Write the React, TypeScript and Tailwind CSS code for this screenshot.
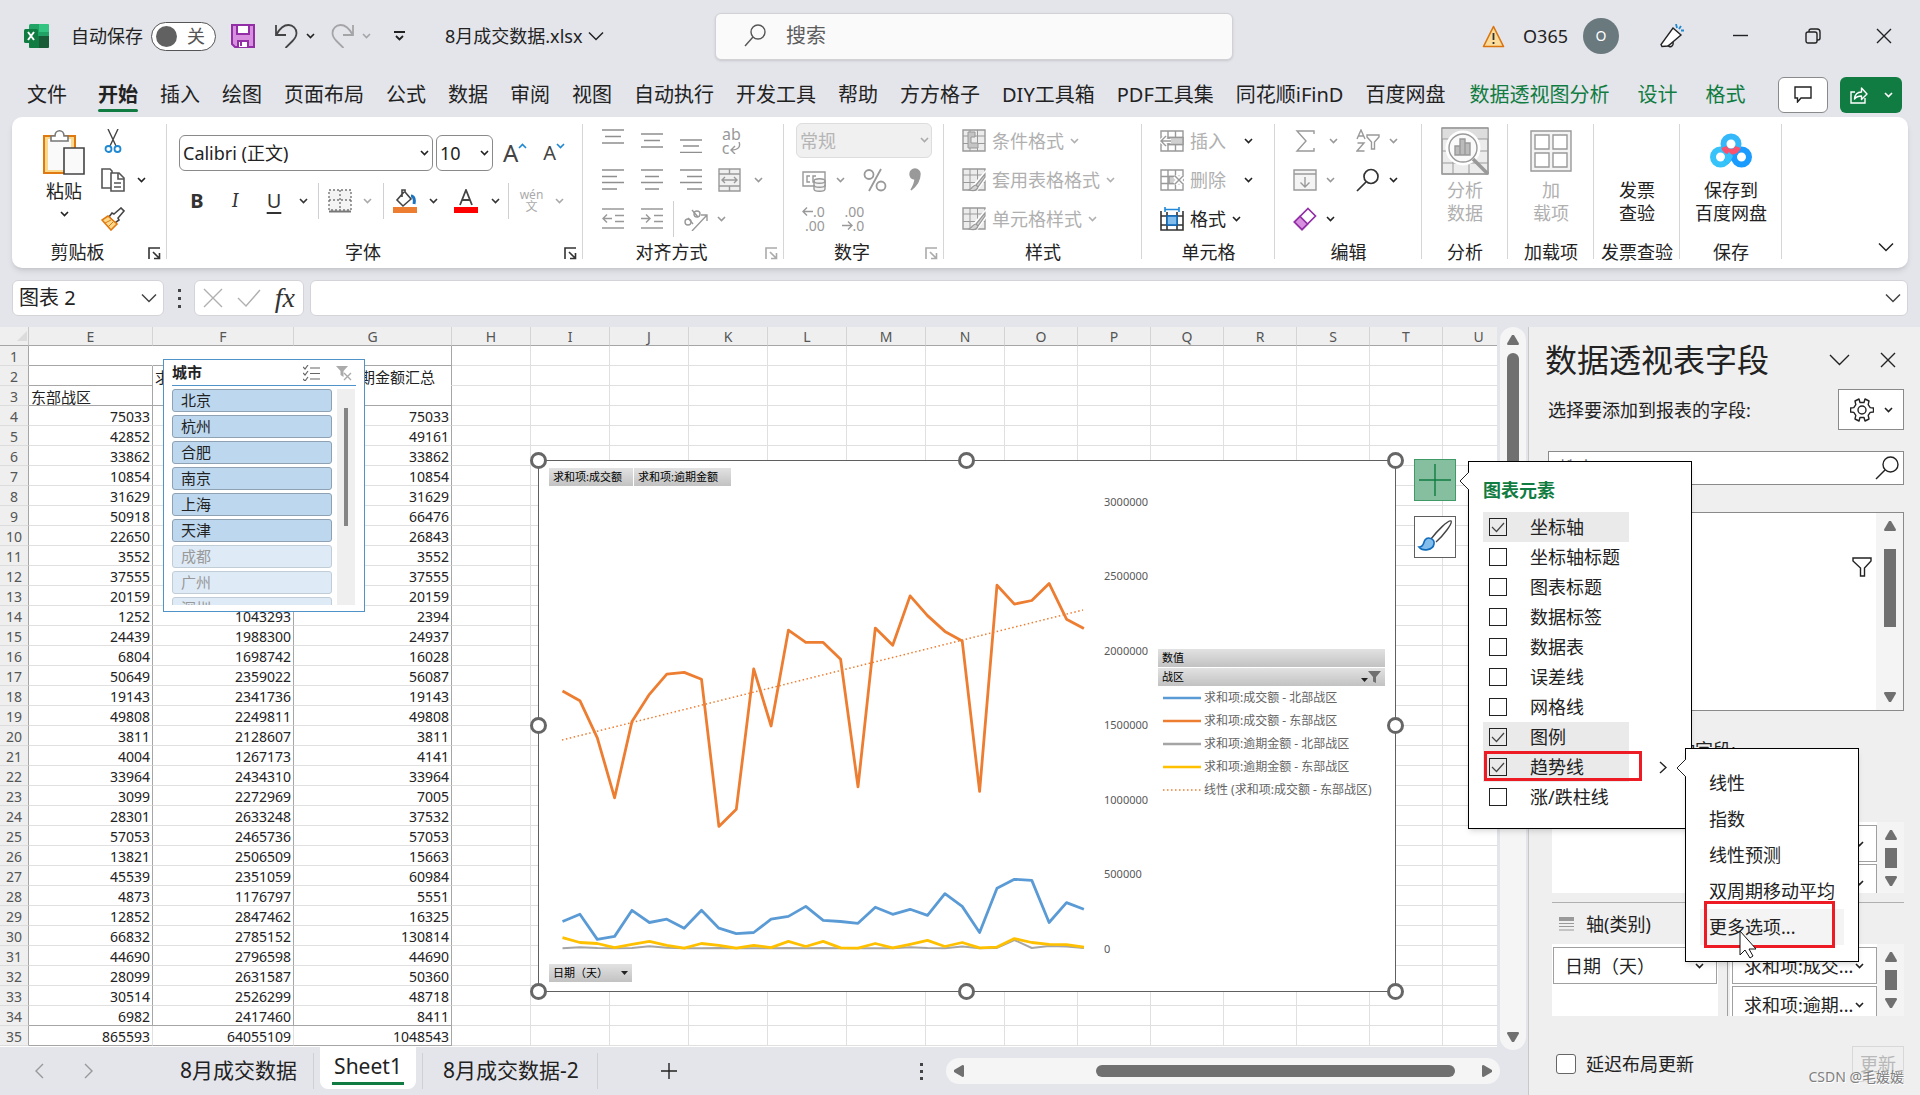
import { useState } from "react";
import type { ReactNode } from "react";
import clsx from "clsx";

const FONT = "font-['Noto_Sans','Noto_Sans_CJK_SC',sans-serif]";

const TABS = [
  "插入",
  "绘图",
  "页面布局",
  "公式",
  "数据",
  "审阅",
  "视图",
  "自动执行",
  "开发工具",
  "帮助",
  "方方格子",
  "DIY工具箱",
  "PDF工具集",
  "同花顺iFinD",
  "百度网盘",
];
const CONTEXT_TABS = ["数据透视图分析", "设计", "格式"];

const COLUMNS = [
  { name: "E", width: "w-[124px]" },
  { name: "F", width: "w-[141px]" },
  { name: "G", width: "w-[158px]" },
  { name: "H", width: "w-[79px]" },
  { name: "I", width: "w-[79px]" },
  { name: "J", width: "w-[79px]" },
  { name: "K", width: "w-[79px]" },
  { name: "L", width: "w-[79px]" },
  { name: "M", width: "w-[79px]" },
  { name: "N", width: "w-[79px]" },
  { name: "O", width: "w-[73px]" },
  { name: "P", width: "w-[73px]" },
  { name: "Q", width: "w-[73px]" },
  { name: "R", width: "w-[73px]" },
  { name: "S", width: "w-[73px]" },
  { name: "T", width: "w-[73px]" },
  { name: "U", width: "" },
];

// columns E, F and G of the pivot table, one entry per sheet row
const ROWS: string[][] = [
  ["", "", ""],
  ["", "求和项:成交额汇总", "求和项:逾期金额汇总"],
  ["东部战区", "", ""],
  ["75033", "", "75033"],
  ["42852", "", "49161"],
  ["33862", "", "33862"],
  ["10854", "", "10854"],
  ["31629", "", "31629"],
  ["50918", "", "66476"],
  ["22650", "", "26843"],
  ["3552", "", "3552"],
  ["37555", "", "37555"],
  ["20159", "", "20159"],
  ["1252", "1043293", "2394"],
  ["24439", "1988300", "24937"],
  ["6804", "1698742", "16028"],
  ["50649", "2359022", "56087"],
  ["19143", "2341736", "19143"],
  ["49808", "2249811", "49808"],
  ["3811", "2128607", "3811"],
  ["4004", "1267173", "4141"],
  ["33964", "2434310", "33964"],
  ["3099", "2272969", "7005"],
  ["28301", "2633248", "37532"],
  ["57053", "2465736", "57053"],
  ["13821", "2506509", "15663"],
  ["45539", "2351059", "60984"],
  ["4873", "1176797", "5551"],
  ["12852", "2847462", "16325"],
  ["66832", "2785152", "130814"],
  ["44690", "2796598", "44690"],
  ["28099", "2631587", "50360"],
  ["30514", "2526299", "48718"],
  ["6982", "2417460", "8411"],
  ["865593", "64055109", "1048543"],
];

const SLICER = [
  { name: "北京", on: true },
  { name: "杭州", on: true },
  { name: "合肥", on: true },
  { name: "南京", on: true },
  { name: "上海", on: true },
  { name: "天津", on: true },
  { name: "成都", on: false },
  { name: "广州", on: false },
  { name: "深圳", on: false },
];

// chart series, in thousands
const EAST = [1729, 1664, 1415, 1012, 1525, 1707, 1842, 1854, 1808, 820, 935, 1878, 1494, 2137, 2055, 2055, 1942, 1086, 2151, 2036, 2367, 2235, 2129, 2065, 1055, 2439, 2312, 2336, 2451, 2211, 2149];
const NORTH = [182, 230, 62, 82, 257, 175, 197, 137, 257, 137, 101, 108, 197, 216, 283, 189, 182, 170, 278, 230, 264, 223, 369, 283, 108, 405, 465, 458, 175, 309, 264];
const EAST_DUE = [74, 41, 34, 7, 29, 48, 22, 3, 34, 22, 3, 22, 7, 48, 14, 48, 5, 3, 34, 5, 29, 55, 14, 41, 5, 10, 67, 41, 29, 26, 10];
const NORTH_DUE = [3, 9, 4, 3, 4, 16, 6, 2, 3, 4, 3, 3, 3, 4, 3, 4, 3, 2, 3, 3, 9, 4, 3, 14, 3, 5, 58, 4, 18, 14, 5];

const LEGEND = [
  { label: "求和项:成交额 - 北部战区", color: "#5b9bd5", dotted: false },
  { label: "求和项:成交额 - 东部战区", color: "#ed7d31", dotted: false },
  { label: "求和项:逾期金额 - 北部战区", color: "#a5a5a5", dotted: false },
  { label: "求和项:逾期金额 - 东部战区", color: "#ffc000", dotted: false },
  { label: "线性 (求和项:成交额 - 东部战区)", color: "#ed7d31", dotted: true },
];

const ELEMENTS = ["坐标轴", "坐标轴标题", "图表标题", "数据标签", "数据表", "误差线", "网格线", "图例", "趋势线", "涨/跌柱线"];
const TREND_ITEMS = ["线性", "指数", "线性预测", "双周期移动平均", "更多选项..."];

type IconProps = { children: ReactNode; size?: number; w?: number; className?: string; stroke?: number };

function Icon({ children, size = 24, w, className, stroke = 1.4 }: IconProps) {
  return (
    <svg
      width={w ?? size}
      height={size}
      viewBox={`0 0 ${w ?? size} ${size}`}
      fill="none"
      stroke="currentColor"
      strokeWidth={stroke}
      className={clsx("shrink-0", className)}
      aria-hidden="true"
    >
      {children}
    </svg>
  );
}

function Chevron({ className, big }: { className?: string; big?: boolean }) {
  return big ? (
    <svg width="16" height="10" viewBox="0 0 16 10" fill="none" stroke="currentColor" strokeWidth="1.5" className={clsx("shrink-0", className)}>
      <path d="M1 1.5l7 7 7-7" />
    </svg>
  ) : (
    <svg width="9" height="6" viewBox="0 0 9 6" fill="none" stroke="currentColor" strokeWidth="1.6" className={clsx("shrink-0", className)}>
      <path d="M1 1l3.5 3.5L8 1" />
    </svg>
  );
}

function Tool({ label, className, children }: { label: string; className?: string; children: ReactNode }) {
  return (
    <button type="button" aria-label={label} className={clsx("flex h-[39px] shrink-0 items-center justify-center", className)}>
      {children}
    </button>
  );
}

function Group({ label, className, launcher, children }: { label: string; className: string; launcher?: string; children: ReactNode }) {
  return (
    <section className={clsx("relative flex shrink-0 flex-col pt-1", className)}>
      <div className="h-[117px]">{children}</div>
      <div className={clsx("flex h-7 items-center justify-center text-lg", launcher && "pr-6")}>{label}</div>
      {launcher && (
        <button type="button" aria-label={`${label}设置`} className={clsx("absolute right-1.5 bottom-2", launcher)}>
          <Icon size={13} stroke={1.6}>
            <path d="M1 12V1h11M5 5l6 6M11.5 6v5.5H6" />
          </Icon>
        </button>
      )}
      <div className="absolute top-[7px] right-0 h-[135px] w-px bg-[#d6d6d6]" />
    </section>
  );
}

function TitleBar() {
  return (
    <header className="flex h-[72px] shrink-0 items-center pl-6">
      <svg width="25" height="24" viewBox="0 0 25 24" className="shrink-0">
        <rect x="5" width="20" height="24" rx="1.5" fill="#21a366" />
        <path d="M15 0h8.500a1.500 1.500 0 0 1 1.500 1.500V8H15z" fill="#33c481" />
        <path d="M5 12h10v12H6.500A1.500 1.500 0 0 1 5 22.500z" fill="#107c41" />
        <path d="M15 12h10v10.500a1.500 1.500 0 0 1-1.500 1.500H15z" fill="#185c37" />
        <rect y="5" width="14" height="14" rx="1.500" fill="#107c41" />
        <path d="M4 8l6 8M10 8l-6 8" stroke="#fff" strokeWidth="2" />
      </svg>
      <span className="ml-[22px] text-lg">自动保存</span>
      <button type="button" role="switch" aria-checked="false" aria-label="自动保存" className="ml-2 flex h-[29px] w-[65px] shrink-0 items-center gap-2.5 rounded-full border border-[#555] bg-white pl-1 text-lg text-[#555]">
        <span className="size-[21px] rounded-full bg-[#616161]" />关
      </button>
      <button type="button" aria-label="保存" className="ml-[15px]">
        <Icon className="text-[#922fa6]" stroke={2}>
          <path d="M1 1h22v22H4l-3-3z" fill="#d98fe0" />
          <path d="M6 1h12v9H6zM7 23v-6h10v6" fill="#fff" />
          <path d="M10 18v4" />
        </Icon>
      </button>
      <button type="button" aria-label="撤消" className="ml-5 flex items-center gap-2 text-[#444]">
        <Icon size={24} w={23} stroke={1.8}>
          <path d="M1 1v10h10M1.500 10.500C5 4 9 1 13.500 1c4.500 0 8 3.500 8 8 0 3-1 5-4 8l-7 7" />
        </Icon>
        <Chevron className="text-[#222]" />
      </button>
      <button type="button" aria-label="恢复" className="ml-4 flex items-center gap-2 text-[#a5a5a8]">
        <Icon size={24} w={23} stroke={1.8}>
          <path d="M22 1v10H12M21.500 10.500C18 4 14 1 9.500 1c-4.500 0-8 3.500-8 8 0 3 1 5 4 8l7 7" />
        </Icon>
        <Chevron />
      </button>
      <button type="button" aria-label="自定义快速访问工具栏" className="ml-[23px]">
        <Icon size={10} w={11} stroke={1.800}>
          <path d="M0 1h11M2 5l3.500 3.500L9 5" />
        </Icon>
      </button>
      <button type="button" className="ml-10 flex w-40 shrink-0 items-center gap-1.5 text-lg whitespace-nowrap">
        8月成交数据.xlsx
        <Chevron big />
      </button>
      <label className="ml-[110px] flex h-[47px] w-[518px] items-center gap-5 rounded-md border border-[#d2d2d6] bg-[#fafafa] pl-7 shadow-sm">
        <Icon size={24} w={22} className="text-[#555]">
          <circle cx="14" cy="8" r="7" />
          <path d="M9 13L1 22" />
        </Icon>
        <input aria-label="搜索" placeholder="搜索" className="min-w-0 flex-1 bg-transparent text-xl outline-none placeholder:text-[#5c5c5c]" />
      </label>
      <div className="ml-auto flex items-center">
        <Icon size={23} w={23} className="text-[#d9730d]" stroke={1.600}>
          <path d="M11.500 1.500l10 20H1.500z" fill="#fbdc9a" strokeLinejoin="round" />
          <path d="M11.500 8v7M11.500 17v2" stroke="#333" strokeWidth="1.800" />
        </Icon>
        <span className="ml-[18px] text-lg">O365</span>
        <span className="ml-[15px] grid size-9 place-items-center rounded-full bg-[#69797e] text-sm text-white">O</span>
        <button type="button" aria-label="新增功能" className="ml-10">
          <Icon size={24} w={25}>
            <path d="M14 4l8 7-13 11-6 .500-1-2z" fill="#fff" />
            <path d="M9 21c1 3 6 2 5-3" />
            <path d="M17 0l1 4M22 2l-2 3M25 6.500h-3" stroke="#1e88d2" strokeWidth="1.800" />
          </Icon>
        </button>
        <button type="button" aria-label="最小化" className="ml-[49px]">
          <Icon size={16}><path d="M0 7.500h15" stroke="#222" /></Icon>
        </button>
        <button type="button" aria-label="向下还原" className="ml-[56px]">
          <Icon size={16} className="text-[#222]">
            <rect x="1" y="4" width="11" height="11" rx="2" />
            <path d="M4 4V3a2 2 0 0 1 2-2h6a3 3 0 0 1 3 3v6a2 2 0 0 1-2 2h-1" />
          </Icon>
        </button>
        <button type="button" aria-label="关闭" className="mr-7 ml-[55px]">
          <Icon size={16} className="text-[#222]"><path d="M1 1l14 14M15 1L1 15" /></Icon>
        </button>
      </div>
    </header>
  );
}

function TabBar() {
  return (
    <nav className="flex h-[45px] shrink-0 items-center pr-[18px] pl-[27px] text-xl whitespace-nowrap">
      <button type="button">文件</button>
      <button type="button" className="relative ml-[31px] font-bold">
        开始
        <span className="absolute -bottom-[3px] left-0 h-[3px] w-full rounded-full bg-[#107c41]" />
      </button>
      <div className="ml-[22px] flex gap-[22px]">
        {TABS.map((tab) => (
          <button key={tab} type="button">{tab}</button>
        ))}
      </div>
      <div className="ml-6 flex gap-7 text-[#107c41]">
        {CONTEXT_TABS.map((tab) => (
          <button key={tab} type="button">{tab}</button>
        ))}
      </div>
      <button type="button" aria-label="批注" className="ml-auto grid h-9 w-[50px] place-items-center rounded-md border border-[#8a8a8a] bg-white">
        <Icon size={17} w={18}><path d="M1 1h16v11H7l-3.500 4v-4H1z" /></Icon>
      </button>
      <button type="button" aria-label="共享" className="ml-3 flex h-9 w-[62px] items-center justify-center gap-4 rounded-md bg-[#107c41] text-white">
        <Icon size={18} w={18}>
          <path d="M5 6H1v11h14v-5" />
          <path d="M4.500 13c.500-5 3-7 7-7V2l5.500 6-5.500 5.500V10c-3 0-5 .500-7 3z" strokeLinejoin="round" />
        </Icon>
        <Chevron />
      </button>
    </nav>
  );
}

function AlignIcon({ kind }: { kind: "left" | "center" | "right" | "top" | "middle" | "bottom" }) {
  const lines = {
    left: "M0 2h22M0 8.500h15M0 14.500h22M0 21h15",
    center: "M0 2h22M4 8.500h14M0 14.500h22M4 21h14",
    right: "M0 2h22M7 8.500h15M0 14.500h22M7 21h15",
    top: "M0 1h22M3 7.500h16M0 14h22",
    middle: "M0 5h22M3 11.500h16M0 18h22",
    bottom: "M0 11h22M3 17h16M0 23.500h22",
  };
  return <Icon w={22} className="text-[#8f8f8f]"><path d={lines[kind]} /></Icon>;
}

function StyleIcon({ brush }: { brush?: boolean }) {
  return (
    <Icon className="text-[#999]">
      <path d="M1 1h22v21H1z" fill="#ececec" />
      <path d="M8 1v21M15.500 1v21M1 7h22M1 14.500h22" strokeWidth="1" />
      {brush ? (
        <>
          <path d="M24 4L12 18l3 3 9-12z" fill="#fff" stroke="#fff" strokeWidth="3" />
          <path d="M23 6l-9 11 2 2 7-10zM14 17c-3 0-3 3-7 5 4 1 8 1 9-3z" fill="#d4d4d4" strokeWidth="1.200" />
        </>
      ) : (
        <path d="M6 3h7v5H9v6h7v5H6z" fill="#c4c4c4" strokeWidth="1" />
      )}
    </Icon>
  );
}

function CellIcon({ kind }: { kind: "insert" | "delete" | "format" }) {
  if (kind === "format") {
    return (
      <Icon className="text-[#333]" stroke={1.600}>
        <path d="M1 4v19h22V4M1 9h22M1 18h22M7 5v18M17 5v18" />
        <rect x="7" y="9" width="10" height="9" fill="#83bdec" stroke="#0f6cbd" />
        <path d="M5 2.500h14M5 0v5M19 0v5" stroke="#2088d8" />
      </Icon>
    );
  }
  return (
    <Icon className="text-[#999]">
      <path d="M1 2h22v20H1zM1 8.500h22M1 15.500h22M8 2v20M15.500 2v20" />
      <rect x="9" y="8.500" width="14" height="7" fill="#d0d0d0" />
      {kind === "insert" ? (
        <>
          <path d="M11 12H1M6 7l-5 5 5 5" stroke="#fff" strokeWidth="4" />
          <path d="M11 12H1M6 7l-5 5 5 5" />
        </>
      ) : (
        <>
          <path d="M15 8l8 8M23 8l-8 8" stroke="#fff" strokeWidth="5" />
          <path d="M15 8l8 8M23 8l-8 8" />
        </>
      )}
    </Icon>
  );
}

function Divider({ className }: { className?: string }) {
  return <div className={clsx("h-9 w-px shrink-0 bg-[#d0d0d2]", className)} />;
}

function Ribbon() {
  return (
    <div className="mx-3 flex h-[151px] shrink-0 rounded-[10px] bg-white shadow-md">
      <Group label="剪贴板" className="w-[155px]" launcher="text-[#333]">
        <div className="flex pl-[31px]">
          <button type="button" className="flex w-[42px] shrink-0 flex-col items-center pt-2 text-lg">
            <Icon size={46} w={42} className="shrink-0 text-[#e07a10]" stroke={2}>
              <path d="M1 7h31v37H1z" fill="#fbd98c" />
              <path d="M5 10h23v31H5z" fill="#fafafa" stroke="none" />
              <path d="M8 12V7h4c0-7 9-7 9 0h4v5z" fill="#fff" stroke="#777" strokeWidth="1.600" />
              <path d="M21 19h20v26H21z" fill="#fafafa" stroke="#444" strokeWidth="1.600" />
            </Icon>
            <span className="mt-0.5 leading-7 whitespace-nowrap">粘贴</span>
            <Chevron className="mt-1.5" />
          </button>
          <div className="ml-4 flex flex-col items-start">
            <Tool label="剪切">
              <Icon size={24} className="text-[#444]">
                <path d="M7 0l8 17M17 0L9 17" />
                <circle cx="7.500" cy="20" r="3" stroke="#1e88d2" strokeWidth="1.800" />
                <circle cx="16.500" cy="20" r="3" stroke="#1e88d2" strokeWidth="1.800" />
              </Icon>
            </Tool>
            <Tool label="复制" className="gap-3">
              <Icon size={24} className="text-[#555]" stroke={1.600}>
                <path d="M1 1h8l2 2v17H1z" fill="#fff" />
                <path d="M10 5h8l5 5v13H10z" fill="#fff" />
                <path d="M17 5v6h6M13 15h7M13 19h7" />
              </Icon>
              <Chevron />
            </Tool>
            <Tool label="格式刷">
              <Icon size={24} stroke={1.600}>
                <path d="M13 7l7-6 3 3-6 7 1 2-4 3-6-6 3-4z" fill="#fff" stroke="#444" />
                <path d="M7 9L1 13l9 10 6-6z" fill="#fbd98c" stroke="#e07a10" />
                <path d="M4 16l6-3M7 20l5-5" stroke="#e07a10" strokeWidth="1" />
              </Icon>
            </Tool>
          </div>
        </div>
      </Group>

      <Group label="字体" className="w-[416px]" launcher="text-[#333]">
        <div className="flex h-[60px] items-center pt-1 pl-3">
          <div className="relative">
            <select aria-label="字体" className="h-9 w-[254px] appearance-none rounded-md border border-[#8a8a8a] pl-[3px] text-lg">
              <option>Calibri (正文)</option>
            </select>
            <Chevron className="pointer-events-none absolute top-[15px] right-1" />
          </div>
          <div className="relative ml-[3px]">
            <select aria-label="字号" className="h-9 w-[57px] appearance-none rounded-md border border-[#8a8a8a] pl-[3px] text-lg">
              <option>10</option>
            </select>
            <Chevron className="pointer-events-none absolute top-[15px] right-1" />
          </div>
          <button type="button" aria-label="增大字号" className="ml-2.5 flex items-start text-2xl leading-7 text-[#444]">
            A<Chevron className="mt-1 rotate-180 text-[#1e88d2]" />
          </button>
          <button type="button" aria-label="减小字号" className="ml-4 flex items-start text-xl leading-7 text-[#444]">
            A<Chevron className="mt-1 text-[#1e88d2]" />
          </button>
        </div>
        <div className="flex items-center pl-[11px] text-xl text-[#333]">
          <Tool label="加粗" className="w-[38px] font-bold">B</Tool>
          <Tool label="倾斜" className="w-[38px] font-serif italic">I</Tool>
          <Tool label="下划线" className="w-10 underline underline-offset-4">U</Tool>
          <Tool label="下划线样式" className="w-[19px]"><Chevron /></Tool>
          <Divider className="mx-[5px]" />
          <Tool label="边框" className="w-8">
            <Icon className="text-[#777]">
              <path d="M1 1h22v20H1zM12 1v20M1 11h22" strokeDasharray="2 2" fill="#f4f4f4" />
              <path d="M1 22.500h22" strokeWidth="2" />
            </Icon>
          </Tool>
          <Tool label="边框样式" className="w-[23px] text-[#aaa]"><Chevron /></Tool>
          <Divider className="mx-1" />
          <Tool label="填充颜色" className="w-[34px]">
            <Icon className="text-[#444]" stroke={1.600}>
              <path d="M11 3L4 11l6 6 8-7-6-7V1H9v7" />
              <path d="M18 7c3 0 4 4 3 8" stroke="#1a72c0" strokeWidth="3" />
              <path d="M0 18h24v6H0z" fill="#ed7d31" stroke="none" />
            </Icon>
          </Tool>
          <Tool label="更多填充颜色" className="w-[22px]"><Chevron /></Tool>
          <Tool label="字体颜色" className="w-11">
            <Icon className="text-[#444]" stroke={1.800}>
              <path d="M6 16l6-15 6 15M8 11h8" />
              <path d="M0 18h24v6H0z" fill="#f00" stroke="none" />
            </Icon>
          </Tool>
          <Tool label="更多字体颜色" className="w-3.5"><Chevron /></Tool>
          <Divider className="mx-1.5" />
          <Tool label="拼音指南" className="w-[33px] flex-col text-xs leading-3 text-[#aaa]">
            <span>wén</span>
            <span>文</span>
          </Tool>
          <Tool label="拼音设置" className="w-[22px] text-[#aaa]"><Chevron /></Tool>
        </div>
      </Group>

      <Group label="对齐方式" className="w-[201px]" launcher="text-[#aaa]">
        <div className="flex pl-2.5">
          <Tool label="顶端对齐" className="w-[39px]"><AlignIcon kind="top" /></Tool>
          <Tool label="垂直居中" className="w-[39px]"><AlignIcon kind="middle" /></Tool>
          <Tool label="底端对齐" className="w-[39px]"><AlignIcon kind="bottom" /></Tool>
          <Tool label="自动换行" className="w-[43px] text-[#999]">
            <span className="flex flex-col text-base leading-[14px]">
              <span>ab</span>
              <span className="flex items-center">
                c
                <Icon size={12}><path d="M10 0c2 5-1 8-8 8M6 4L2 8l4 4" /></Icon>
              </span>
            </span>
          </Tool>
        </div>
        <div className="flex pl-2.5 text-[#999]">
          <Tool label="左对齐" className="w-[39px]"><AlignIcon kind="left" /></Tool>
          <Tool label="居中" className="w-[39px]"><AlignIcon kind="center" /></Tool>
          <Tool label="右对齐" className="w-[39px]"><AlignIcon kind="right" /></Tool>
          <Tool label="合并后居中" className="w-[39px]">
            <Icon w={23}>
              <path d="M1 1h21v22H1zM1 6h21M1 18h21M11.500 1v5M11.500 18v5" fill="#f0f0f0" />
              <path d="M4 12h15M7 9l-3 3 3 3M16 9l3 3-3 3" />
            </Icon>
          </Tool>
          <Tool label="合并选项" className="w-[18px]"><Chevron /></Tool>
        </div>
        <div className="flex items-center pl-2.5 text-[#999]">
          <Tool label="减少缩进量" className="w-[39px]">
            <Icon w={22}><path d="M0 2h22M13 8.500h9M13 14.500h9M0 21h22M10 11.500H1M5 7.500l-4 4 4 4" /></Icon>
          </Tool>
          <Tool label="增加缩进量" className="w-[39px]">
            <Icon w={22}><path d="M0 2h22M13 8.500h9M13 14.500h9M0 21h22M0 11.500h9M5 7.500l4 4-4 4" /></Icon>
          </Tool>
          <Divider className="ml-0.5" />
          <Tool label="方向" className="w-11">
            <Icon>
              <path d="M8 24L23 8M17 8h6v6" />
              <circle cx="4" cy="15" r="3" />
              <path d="M4 11l5 6M8 3l6 7" />
              <circle cx="13" cy="7" r="3" />
            </Icon>
          </Tool>
          <Tool label="方向选项" className="w-1.5"><Chevron /></Tool>
        </div>
      </Group>

      <Group label="数字" className="w-[160px]" launcher="text-[#aaa]">
        <div className="relative h-[39px] pt-0.5 pl-3">
          <select aria-label="数字格式" disabled className="h-[35px] w-[136px] appearance-none rounded-md border border-[#ddd] bg-[#f0f0f0] pl-[3px] text-lg text-[#b5b5b5] opacity-100">
            <option>常规</option>
          </select>
          <Chevron className="pointer-events-none absolute top-4 right-[15px] text-[#aaa]" />
        </div>
        <div className="flex pl-3.5 text-[#999]">
          <Tool label="会计数字格式" className="w-8">
            <Icon>
              <path d="M1 4h22v14H1z" />
              <path d="M8 8H5v6h3M14 8h-3v6h3" />
              <path d="M12 13c0-3 11-3 11 0v8c0 3-11 3-11 0z" fill="#f4f4f4" />
              <path d="M12 13c0 3 11 3 11 0M12 17c0 3 11 3 11 0" />
            </Icon>
          </Tool>
          <Tool label="会计格式选项" className="w-5"><Chevron /></Tool>
          <Tool label="百分比样式" className="w-[50px]">
            <Icon stroke={1.800}>
              <circle cx="6" cy="6.500" r="4.500" />
              <circle cx="18" cy="18" r="4.500" />
              <path d="M18 1L6 23" />
            </Icon>
          </Tool>
          <Tool label="千位分隔样式" className="w-[30px]">
            <Icon w={14}><path d="M2 6a5 5 0 0 1 10 0c0 7-4 12-9 16 3-5 4-8 4-11-3 0-5-2-5-5z" fill="currentColor" /></Icon>
          </Tool>
        </div>
        <div className="flex pl-2.5 text-sm leading-[14px] text-[#999]">
          <Tool label="增加小数位数" className="w-[39px]">
            <span className="flex flex-col items-end">
              <span className="flex items-center"><Icon size={9} w={11}><path d="M11 4.500H1M5 .500l-4 4 4 4" /></Icon>.0</span>
              <span>.00</span>
            </span>
          </Tool>
          <Tool label="减少小数位数" className="w-10">
            <span className="flex flex-col items-end">
              <span>.00</span>
              <span className="flex items-center"><Icon size={9} w={11}><path d="M0 4.500h10M6 .500l4 4-4 4" /></Icon>.0</span>
            </span>
          </Tool>
        </div>
      </Group>

      <Group label="样式" className="w-[198px]">
        <div className="flex flex-col items-start pl-[18px] text-lg text-[#b0b0b0]">
          <Tool label="条件格式" className="gap-1.5"><StyleIcon />条件格式<Chevron /></Tool>
          <Tool label="套用表格格式" className="gap-1.5"><StyleIcon brush />套用表格格式<Chevron /></Tool>
          <Tool label="单元格样式" className="gap-1.5"><StyleIcon brush />单元格样式<Chevron /></Tool>
        </div>
      </Group>

      <Group label="单元格" className="w-[133px]">
        <div className="flex flex-col items-start pl-[18px] text-lg text-[#b0b0b0]">
          <Tool label="插入" className="gap-1.5"><CellIcon kind="insert" />插入<Chevron className="ml-3 text-[#222]" /></Tool>
          <Tool label="删除" className="gap-1.5"><CellIcon kind="delete" />删除<Chevron className="ml-3 text-[#222]" /></Tool>
          <Tool label="格式" className="gap-1.5 text-[#222]"><CellIcon kind="format" />格式<Chevron /></Tool>
        </div>
      </Group>

      <Group label="编辑" className="w-[147px]">
        <div className="grid grid-cols-[24px_33px_36px_14px] pl-[18px] text-[#999]">
          <Tool label="自动求和"><Icon w={20}><path d="M19 5V2H2l9 10-9 10h17v-3" /></Icon></Tool>
          <Tool label="求和选项"><Chevron /></Tool>
          <Tool label="排序和筛选">
            <Icon>
              <path d="M1 10l4-9 4 9M2.500 7h5M1.500 14H8l-7 8h7.500" />
              <path d="M11 6h12v2l-4.500 5v7h-3v-7L11 8z" />
            </Icon>
          </Tool>
          <Tool label="排序选项"><Chevron /></Tool>
          <Tool label="填充">
            <Icon>
              <path d="M1 2h22v20H1z" fill="#f4f4f4" />
              <path d="M1 6h22M12 9v10M7.500 14.500L12 19l4.500-4.500" />
            </Icon>
          </Tool>
          <Tool label="填充选项" className="pr-1.5"><Chevron /></Tool>
          <Tool label="查找和选择">
            <Icon className="text-[#333]" stroke={1.700}>
              <circle cx="15" cy="8.500" r="7" />
              <path d="M10 14l-9 9" />
            </Icon>
          </Tool>
          <Tool label="查找选项"><Chevron className="text-[#222]" /></Tool>
          <Tool label="清除">
            <Icon stroke={1.700} className="text-[#922fa6]">
              <path d="M15 1.500l7.500 7.500L9 22.500 1.500 15z" fill="#fff" />
              <path d="M7 9.500L1.500 15 9 22.500l5.500-5.500z" fill="#d98fe0" />
            </Icon>
          </Tool>
          <Tool label="清除选项" className="pr-1.5"><Chevron className="text-[#222]" /></Tool>
        </div>
      </Group>

      <Group label="分析" className="w-[86px]">
        <button type="button" className="flex w-full flex-col items-center pt-1.5 text-lg leading-[23px] text-[#b0b0b0]">
          <Icon size={48} className="mb-1 text-[#999]">
            <path d="M1 1h46v46H1z" fill="#ececec" />
            <path d="M1 7h46" strokeWidth="10" stroke="#ddd" />
            <path d="M1 1h46v46H1zM1 12h46M1 24h46M1 36h46M12 12v35M28 12v35" strokeWidth="1" />
            <circle cx="22" cy="21" r="15.500" fill="#fafafa" stroke="#fff" strokeWidth="4" />
            <circle cx="22" cy="21" r="14" fill="#fafafa" />
            <path d="M14 28v-9h5v9zM19 28V12h5v16zM24 28V16h5v12z" fill="#bbb" />
            <path d="M32 32l15 15" strokeWidth="3.500" />
          </Icon>
          分析<br />数据
        </button>
      </Group>

      <Group label="加载项" className="w-[86px]">
        <button type="button" className="flex w-full flex-col items-center pt-1.5 text-lg leading-[23px] text-[#b0b0b0]">
          <Icon size={48} className="mb-1 text-[#999]">
            <path d="M4 4h40v40H4z" fill="#f4f4f4" />
            <path d="M8 8h14v14H8zM26 8h14v14H26zM8 26h14v14H8zM26 26h14v14H26z" fill="#fff" />
          </Icon>
          加<br />载项
        </button>
      </Group>

      <Group label="发票查验" className="w-[86px]">
        <button type="button" className="w-full pt-[58px] text-lg leading-[23px]">
          发票<br />查验
        </button>
      </Group>

      <Group label="保存" className="w-[102px]">
        <button type="button" className="flex w-full flex-col items-center pt-1.5 text-lg leading-[23px] whitespace-nowrap">
          <Icon size={48} className="mb-1" stroke={6}>
            <circle cx="13.500" cy="30" r="7.500" stroke="#35c3fa" />
            <circle cx="34.500" cy="30" r="7.500" stroke="#1a9cff" />
            <path d="M19 35l10-10" stroke="#1a9cff" />
            <circle cx="24" cy="17" r="7.500" stroke="#35b8fa" />
            <path d="M17 20a7.500 7.500 0 0 0 14 0" stroke="#f9516e" />
            <path d="M19 35c3-3 3-6 5-8" stroke="#35c3fa" />
          </Icon>
          保存到<br />百度网盘
        </button>
      </Group>

      <button type="button" aria-label="折叠功能区" className="mt-auto mr-3.5 mb-4 ml-auto">
        <Chevron big />
      </button>
    </div>
  );
}

function FormulaBar() {
  return (
    <div className="mt-3 flex h-9 shrink-0 items-stretch px-3">
      <label className="flex w-[152px] items-center rounded-md border border-[#d4d4d8] bg-white pr-1.5 pl-1.5">
        <input aria-label="名称框" defaultValue="图表 2" className="w-full min-w-0 text-xl outline-none" />
        <Chevron big className="text-[#444]" />
      </label>
      <div className="flex w-[30px] flex-col items-center justify-center gap-[5px]">
        <span className="size-[3px] bg-[#444]" />
        <span className="size-[3px] bg-[#444]" />
        <span className="size-[3px] bg-[#444]" />
      </div>
      <div className="flex w-[110px] items-center justify-between rounded-md border border-[#d4d4d8] bg-white px-2 text-[#b0b0b0]">
        <button type="button" aria-label="取消"><Icon size={20}><path d="M1 1l18 18M19 1L1 19" /></Icon></button>
        <button type="button" aria-label="输入"><Icon size={18} w={24}><path d="M1 9l8 8L23 1" /></Icon></button>
        <button type="button" className="font-['Liberation_Serif',serif] text-[28px] leading-8 text-[#333] italic">fx</button>
      </div>
      <label className="ml-1.5 flex flex-1 items-center rounded-md border border-[#d4d4d8] bg-white pr-1.5 pl-2">
        <input aria-label="编辑栏" className="w-full outline-none" />
        <Chevron big className="text-[#444]" />
      </label>
    </div>
  );
}

function cellBorder(row: number, col: number) {
  if (col > 2) return "border-[#e0e0e0]";
  const right = col === 2 || (row > 1 && row < 35) ? "border-r-[#a6a6a6]" : row === 1 ? "border-r-transparent" : "border-r-[#e0e0e0]";
  let bottom = "border-b-[#e0e0e0]";
  if (row === 1 || row === 3 || row >= 34 || (row === 2 && col === 0)) bottom = "border-b-[#a6a6a6]";
  else if (row === 2) bottom = "border-b-transparent";
  return `${right} ${bottom}`;
}

function Grid() {
  return (
    <table className="w-[calc(100%+18px)] table-fixed border-separate border-spacing-0 bg-white text-sm">
      <colgroup>
        <col className="w-[29px]" />
        {COLUMNS.map((col) => (
          <col key={col.name} className={col.width} />
        ))}
      </colgroup>
      <thead>
        <tr className="h-[19px] bg-[#efefef] text-[#555]">
          <th className="border-r border-b border-[#c8c8c8] border-b-[#a6a6a6] p-0">
            <svg width="12" height="12" viewBox="0 0 12 12" className="ml-auto"><path d="M11 1v10H1z" fill="#dcdcdc" /></svg>
          </th>
          {COLUMNS.map((col) => (
            <th key={col.name} scope="col" className="border-r border-b border-r-[#d4d4d4] border-b-[#a6a6a6] p-0 pt-0.5 leading-4 font-normal">
              {col.name}
            </th>
          ))}
        </tr>
      </thead>
      <tbody>
        {ROWS.map((cells, i) => (
          <tr key={i} className="h-5">
            <th scope="row" className="border-r border-b border-r-[#a6a6a6] border-b-[#dcdcdc] bg-[#efefef] p-0 pt-[3px] leading-4 font-normal text-[#555]">
              {i + 1}
            </th>
            {COLUMNS.map((col, c) => (
              <td
                key={col.name}
                className={clsx(
                  "overflow-hidden border-r border-b p-0 pt-[3px] leading-4 whitespace-nowrap",
                  i > 2 ? "pr-0.5 text-right" : "pl-0.5 text-left text-[15px]",
                  cellBorder(i + 1, c),
                )}
              >
                {cells[c] ?? ""}
              </td>
            ))}
          </tr>
        ))}
      </tbody>
    </table>
  );
}

function Slicer() {
  return (
    <div className="absolute top-8 left-[163px] flex h-[253px] w-[202px] flex-col border border-[#4f93c8] bg-white px-2 pb-1.5">
      <div className="flex h-[26px] items-center border-b border-[#4f93c8] text-[15px] font-bold">
        <span className="flex-1">城市</span>
        <button type="button" aria-label="多选" className="text-[#666]">
          <Icon size={16} w={17}><path d="M0 2l2 2 3-4M0 8l2 2 3-4M0 14l2 2 3-4M7 3h10M7 8.500h10M7 14h10" strokeWidth="1.200" /></Icon>
        </button>
        <button type="button" aria-label="清除筛选器" className="mr-1 ml-4 text-[#aaa]">
          <Icon size={16}>
            <path d="M0 1h12L7.500 6v6l-3-2V6z" fill="currentColor" stroke="none" />
            <path d="M8 8l7 7M15 8l-7 7" />
          </Icon>
        </button>
      </div>
      <div className="mt-[3px] flex min-h-0 flex-1 overflow-hidden">
        <div className="flex w-[160px] flex-col gap-[3px] overflow-hidden">
          {SLICER.map((item) => (
            <button
              key={item.name}
              type="button"
              className={clsx(
                "h-[23px] shrink-0 rounded-[3px] border pl-2 text-left text-[15px] leading-[21px]",
                item.on ? "border-[#8ea2b4] bg-[#bdd7ee]" : "border-[#c0ccd6] bg-[#deebf7] text-[#999]",
              )}
            >
              {item.name}
            </button>
          ))}
        </div>
        <div className="ml-[5px] w-[18px] bg-[#efefef] pt-[19px]">
          <div className="mx-auto h-[118px] w-1 bg-[#858585]" />
        </div>
      </div>
    </div>
  );
}

const plotX = (i: number) => 13.5 + i * 17.38;
const plotY = (v: number) => 462.6 - v * 0.149;
const toPoints = (values: number[]) => values.map((v, i) => `${plotX(i).toFixed(1)},${plotY(v).toFixed(1)}`).join(" ");

const FIELD_BUTTON = "flex h-[18px] items-center bg-linear-to-b from-[#e2e2e2] to-[#c2c2c2] px-1 text-[11px] text-black";

function Handle({ className }: { className: string }) {
  return <span className={clsx("absolute size-[17px] rounded-full border-3 border-[#666] bg-white", className)} />;
}

function PivotChart() {
  return (
    <div className="absolute top-[133px] left-[538px] flex h-[532px] w-[858px] flex-col border border-[#606060] bg-white pt-[7px] pl-2.5">
      <div className="flex gap-px">
        <button type="button" className={clsx(FIELD_BUTTON, "w-[84px]")}>求和项:成交额</button>
        <button type="button" className={clsx(FIELD_BUTTON, "w-[97px]")}>求和项:逾期金额</button>
      </div>
      <div className="flex items-center">
        <svg width="609" height="478" viewBox="0 0 609 478" fill="none" strokeWidth="2.800" strokeLinejoin="round" className="shrink-0">
          <polyline points={toPoints(NORTH_DUE)} stroke="#a5a5a5" strokeWidth="2" />
          <polyline points={toPoints(NORTH)} stroke="#5b9bd5" />
          <polyline points={toPoints(EAST)} stroke="#ed7d31" />
          <polyline points={toPoints(EAST_DUE)} stroke="#ffc000" />
          <path d="M13 254L534 124" stroke="#ed7d31" strokeWidth="1.500" strokeDasharray="1.500 2.500" />
          <g fill="#595959" stroke="none" fontSize="11">
            {[3000, 2500, 2000, 1500, 1000, 500, 0].map((v) => (
              <text key={v} x="555" y={plotY(v) + 4}>{v * 1000}</text>
            ))}
          </g>
        </svg>
        <div className="w-[227px]">
          <div className={FIELD_BUTTON}>数值</div>
          <button type="button" className={clsx(FIELD_BUTTON, "mt-px w-full justify-between")}>
            战区
            <svg width="20" height="13" viewBox="0 0 20 13">
              <path d="M0 7h7l-3.500 4z" fill="#222" />
              <path d="M7 0h13l-5 6v6l-3-1.500V6z" fill="#707070" />
            </svg>
          </button>
          <ul className="pl-[5px] text-xs text-[#666]">
            {LEGEND.map((item) => (
              <li key={item.label} className="flex h-[23px] items-center gap-[3px] whitespace-nowrap">
                <svg width="38" height="4" viewBox="0 0 38 4" className="shrink-0">
                  <path d="M0 2h38" stroke={item.color} strokeWidth={item.dotted ? 1.5 : 2.5} strokeDasharray={item.dotted ? "1.5 2.5" : undefined} />
                </svg>
                {item.label}
              </li>
            ))}
          </ul>
        </div>
      </div>
      <button type="button" className={clsx(FIELD_BUTTON, "w-[83px] justify-between")}>
        日期（天）
        <svg width="7" height="4" viewBox="0 0 7 4"><path d="M0 0h7L3.500 4z" fill="#222" /></svg>
      </button>
      <Handle className="-top-[9px] -left-[9px]" />
      <Handle className="-top-[9px] left-[419px]" />
      <Handle className="-top-[9px] -right-[9px]" />
      <Handle className="top-[256px] -left-[9px]" />
      <Handle className="top-[256px] -right-[9px]" />
      <Handle className="-bottom-[9px] -left-[9px]" />
      <Handle className="-bottom-[9px] left-[419px]" />
      <Handle className="-right-[9px] -bottom-[9px]" />
    </div>
  );
}

function ChartButtons() {
  return (
    <div className="absolute top-[132px] left-[1414px] flex flex-col gap-[15px]">
      <button type="button" aria-label="图表元素" className="grid size-[42px] place-items-center border border-[#3f9a68] bg-[#86bf9f] text-[#107c41]">
        <Icon size={32}><path d="M16 0v32M0 16h32" /></Icon>
      </button>
      <button type="button" aria-label="图表样式" className="grid size-[42px] place-items-center border border-[#606060] bg-white text-[#444]">
        <Icon size={36}>
          <path d="M14 20C20 12 31 1 34 2c2 2-8 15-15 21" fill="#fff" />
          <path d="M2 28c5 0 4-4 6-7 3-4 10-1 9 4-1 6-11 8-15 3z" fill="#83bdec" stroke="#0f6cbd" strokeWidth="1.600" />
        </Icon>
      </button>
    </div>
  );
}

function Pointer({ className }: { className: string }) {
  return (
    <svg width="10" height="18" viewBox="0 0 10 18" className={clsx("absolute", className)}>
      <path d="M10 0L1 9l9 9" fill="#fff" stroke="#222" />
    </svg>
  );
}

function ChartElements() {
  const [checked, setChecked] = useState(["坐标轴", "图例", "趋势线"]);
  const toggle = (name: string) =>
    setChecked((list) => (list.includes(name) ? list.filter((item) => item !== name) : [...list, name]));

  return (
    <div className="absolute top-[134px] left-[1468px] h-[368px] w-[224px] border border-black bg-white pt-3.5 pl-3.5 text-lg shadow-md">
      <Pointer className="top-2.5 -left-2.5" />
      <h2 className="h-9 leading-7 font-bold text-[#107c41]">图表元素</h2>
      {ELEMENTS.map((name) => {
        const on = checked.includes(name);
        return (
          <label key={name} className={clsx("flex h-[30px] w-[146px] items-center pl-1.5 whitespace-nowrap", on && "bg-[#eaeaea]")}>
            <span className="grid">
              <input
                type="checkbox"
                checked={on}
                onChange={() => toggle(name)}
                className="col-start-1 row-start-1 size-[18px] appearance-none border border-[#222]"
              />
              {on && (
                <svg width="18" height="18" viewBox="0 0 18 18" fill="none" stroke="#444" strokeWidth="1.200" className="pointer-events-none col-start-1 row-start-1">
                  <path d="M3 9l4.500 4.500L15 5" />
                </svg>
              )}
            </span>
            <span className="ml-[23px]">{name}</span>
          </label>
        );
      })}
      <div className="pointer-events-none absolute top-[289px] left-[15px] h-[30px] w-[158px] border-3 border-[#ed1c24]" />
      <button type="button" aria-label="趋势线选项" className="absolute top-[299px] left-[190px]">
        <Icon size={13} w={8}><path d="M1 1l6 5.500L1 12" /></Icon>
      </button>
    </div>
  );
}

function TrendMenu() {
  return (
    <div role="menu" className="absolute top-[421px] left-[1685px] h-[214px] w-[174px] border border-black bg-white pt-4 pl-3.5 text-lg shadow-md">
      <Pointer className="top-2.5 -left-2.5" />
      {TREND_ITEMS.map((item, i) => (
        <button key={item} type="button" role="menuitem" className={clsx("block h-9 w-36 pl-[9px] text-left whitespace-nowrap", i === 4 && "bg-[#f4f4f4]")}>
          {item}
        </button>
      ))}
      <div className="pointer-events-none absolute top-[152px] left-[18px] h-[47px] w-[131px] border-3 border-[#ed1c24]" />
      <svg width="19" height="30" viewBox="0 0 19 30" className="absolute top-[181px] left-[53px]">
        <path d="M1 1v24l5-5 5 8 3-2-4-7h7z" fill="#fff" stroke="#111" />
      </svg>
    </div>
  );
}

function Arrow({ dir }: { dir: "up" | "down" | "left" | "right" }) {
  const paths = {
    up: "M6 2h2l5 8.500L12.500 12h-11L1 10.500z",
    down: "M6 12h2l5-8.500L12.500 2h-11L1 3.500z",
    left: "M2 6v2l8.500 5 1.500-.500v-11L10.500 1z",
    right: "M12 6v2l-8.500 5L2 12.500v-11L3.500 1z",
  };
  return (
    <svg width="14" height="14" viewBox="0 0 14 14" className="shrink-0 text-[#707070]">
      <path d={paths[dir]} fill="currentColor" />
    </svg>
  );
}

function SheetTabs() {
  return (
    <footer className="flex h-12 shrink-0 items-center text-[21px] whitespace-nowrap">
      <button type="button" aria-label="上一个" className="ml-[35px] text-[#999]"><Icon size={16} w={9}><path d="M8 1L1 8l7 7" /></Icon></button>
      <button type="button" aria-label="下一个" className="ml-[40px] text-[#999]"><Icon size={16} w={9}><path d="M1 1l7 7-7 7" /></Icon></button>
      <button type="button" className="ml-[87px]">8月成交数据</button>
      <Divider className="mr-1.5 ml-4" />
      <button type="button" className="flex h-[42px] w-24 flex-col items-center self-start rounded-b-lg bg-white pt-1">
        <span className="leading-[31px]">Sheet1</span>
        <span className="h-[3px] w-[72px] bg-[#107c41]" />
      </button>
      <Divider className="mr-5 ml-1.5" />
      <button type="button">8月成交数据-2</button>
      <Divider className="ml-[18px]" />
      <button type="button" aria-label="新工作表" className="ml-[63px]"><Icon size={16}><path d="M8 0v16M0 8h16" /></Icon></button>
      <div className="ml-auto flex flex-col gap-1">
        <span className="size-[3px] bg-[#444]" />
        <span className="size-[3px] bg-[#444]" />
        <span className="size-[3px] bg-[#444]" />
      </div>
      <div className="mr-7 ml-[23px] flex h-[26px] w-[554px] items-center rounded-full bg-[#f5f5f5] px-1.5">
        <Arrow dir="left" />
        <div className="ml-[130px] h-3 w-[359px] rounded-full bg-[#707070]" />
        <span className="ml-auto flex"><Arrow dir="right" /></span>
      </div>
    </footer>
  );
}

function FieldDrop({ label }: { label: string }) {
  return (
    <button type="button" className="flex h-[37px] shrink-0 items-center justify-between border border-[#a0a0a0] bg-white pr-3 pl-[11px] text-lg whitespace-nowrap">
      {label}
      <Chevron className="ml-auto text-[#222]" />
    </button>
  );
}

function MiniScroll() {
  return (
    <div className="flex w-[27px] shrink-0 flex-col items-center bg-[#f4f4f4] pt-1.5">
      <Arrow dir="up" />
      <div className="my-1.5 h-5 w-3 bg-[#707070]" />
      <Arrow dir="down" />
    </div>
  );
}

function FieldPane() {
  return (
    <aside className="flex w-[392px] shrink-0 flex-col border-l border-[#c8c8c8] bg-[#efefef] pr-4 pl-4">
      <div className="flex h-[62px] items-center pt-1">
        <h1 className="flex-1 text-[32px] whitespace-nowrap">数据透视表字段</h1>
        <button type="button" aria-label="任务窗格选项" className="mr-[30px]"><Icon size={12} w={21}><path d="M1 1l9.500 9.500L20 1" /></Icon></button>
        <button type="button" aria-label="关闭窗格" className="mr-2"><Icon size={16}><path d="M1 1l14 14M15 1L1 15" /></Icon></button>
      </div>
      <div className="flex h-[41px] items-center justify-between pl-[3px] text-lg">
        选择要添加到报表的字段:
        <button type="button" aria-label="工具" className="flex h-[41px] w-[66px] items-center justify-center gap-2.5 border border-[#8a8a8a] bg-white">
          <Icon>
            <circle cx="12" cy="12" r="4" />
            <path d="M9 1l1 3.500h4L15 1l4 2-.800 3.600 2 3 3.300.400v4l-3.300.400-2 3L19 21l-4 2-1-3.500h-4L9 23l-4-2 .800-3.600-2-3L.600 14v-4l3.200-.400 2-3L5 3z" strokeLinejoin="round" />
          </Icon>
          <Chevron />
        </button>
      </div>
      <label className="mt-[21px] ml-[3px] flex h-[34px] items-center border border-[#8a8a8a] bg-white pr-1 pl-2.5">
        <input aria-label="搜索字段" placeholder="搜索" className="min-w-0 flex-1 text-lg outline-none placeholder:text-[#666]" />
        <Icon><circle cx="15.500" cy="8.500" r="7.500" /><path d="M10 14L1 23" /></Icon>
      </label>
      <div className="mt-[27px] ml-[3px] flex h-[199px] justify-end border border-[#8a8a8a] bg-white">
        <button type="button" aria-label="筛选字段" className="mt-[44px] mr-1 self-start">
          <Icon size={20}><path d="M1 1h18v3l-6.500 7v8h-4v-8L1 4z" /></Icon>
        </button>
        <div className="flex w-[27px] flex-col items-center bg-[#f4f4f4] py-1.5">
          <Arrow dir="up" />
          <div className="mt-4 mb-auto h-[78px] w-3 bg-[#707070]" />
          <Arrow dir="down" />
        </div>
      </div>
      <p className="mt-[25px] pl-1.5 text-lg leading-7">在以下区域间拖动字段:</p>
      <div className="mt-[58px] ml-[7px] flex h-[71px] justify-between overflow-hidden">
        <div className="w-[166px] bg-white" />
        <div className="flex">
          <div className="flex w-[147px] flex-col gap-0.5 bg-white pt-[3px] pl-0.5">
            <FieldDrop label="" />
            <FieldDrop label="" />
          </div>
          <MiniScroll />
        </div>
      </div>
      <div className="mt-[9px] ml-[7px] border-t border-[#b0b0b0]">
        <div className="flex h-[41px] items-center gap-3 pl-[7px] text-lg">
          <svg width="15" height="14" viewBox="0 0 15 14"><path d="M0 0h15v4H0zM0 6h15v1H0zM0 9h15v1H0zM0 12.500h15v1H0z" fill="#999" /></svg>
          轴(类别)
        </div>
        <div className="flex h-[72px] justify-between overflow-hidden">
          <div className="flex w-[166px] flex-col bg-white px-px pt-[3px]">
            <FieldDrop label="日期（天）" />
          </div>
          <div className="flex border-l border-[#a0a0a0] pl-0.5">
            <div className="flex w-[147px] flex-col gap-0.5 bg-white pt-[3px] pl-0.5">
              <FieldDrop label="求和项:成交..." />
              <FieldDrop label="求和项:逾期..." />
            </div>
            <MiniScroll />
          </div>
        </div>
      </div>
      <div className="mt-[30px] flex h-9 items-center justify-between pl-[11px] text-lg">
        <label className="flex items-center gap-2.5">
          <input type="checkbox" className="size-5 appearance-none rounded-[3px] border border-[#666] bg-white" />
          延迟布局更新
        </label>
        <button type="button" disabled className="h-9 w-[52px] border border-[#d8d8d8] text-[#b8b8b8]">更新</button>
      </div>
    </aside>
  );
}

export default function App() {
  return (
    <div className={clsx("relative flex h-screen flex-col overflow-hidden bg-[#e4e5eb] text-[#222]", FONT)}>
      <TitleBar />
      <TabBar />
      <Ribbon />
      <FormulaBar />
      <main className="relative mt-[11px] flex min-h-0 flex-1">
        <div className="flex min-w-0 flex-1 flex-col">
          <div className="flex min-h-0 flex-1">
            <div className="relative min-w-0 flex-1 overflow-hidden bg-white">
              <Grid />
              <Slicer />
              <PivotChart />
              <ChartButtons />
            </div>
            <div className="mr-0.5 -mb-[3px] ml-[3px] flex w-[26px] flex-col items-center rounded-full bg-[#f5f5f5] py-1.5">
              <Arrow dir="up" />
              <div className="mt-1.5 mb-auto h-[200px] w-3 rounded-full bg-[#707070]" />
              <Arrow dir="down" />
            </div>
          </div>
          <SheetTabs />
        </div>
        <FieldPane />
        <ChartElements />
        <TrendMenu />
      </main>
      <div className="pointer-events-none absolute right-4 bottom-2 text-sm text-[#808080] [text-shadow:1px_1px_0_#fff]">CSDN @毛媛媛</div>
    </div>
  );
}
